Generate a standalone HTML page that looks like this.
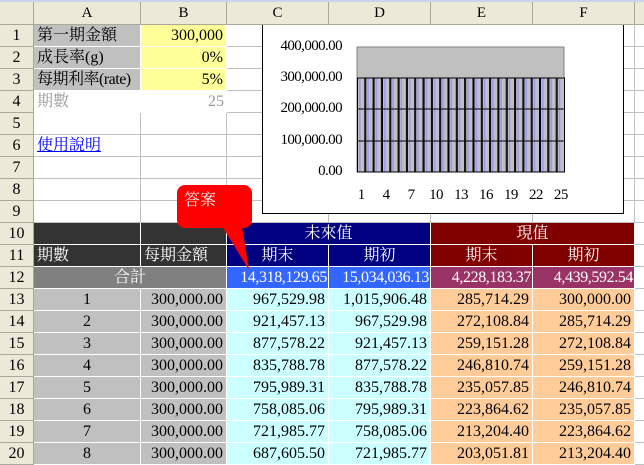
<!DOCTYPE html>
<html><head><meta charset="utf-8"><style>
body{margin:0;width:644px;height:458px;overflow:hidden;background:#fff;font-family:"Liberation Serif","Noto Serif CJK TC",serif;font-size:16px;}
.c{position:absolute;box-sizing:border-box;line-height:21px;white-space:nowrap;overflow:hidden}
.h{background:#ece9d8;color:#000;text-align:center;border-right:1px solid #aca899;border-bottom:1px solid #aca899;font-size:15px}
</style></head><body>
<div id="g"></div>
<svg style="position:absolute;left:0;top:0" width="644" height="458"></svg>
<script>
var X=[0,34,141,227,329,431,533,635,700];
var out='';
function cell(x,y,w,h,bg,txt,al,col,extra){out+='<div class="c" style="left:'+x+'px;top:'+y+'px;width:'+w+'px;height:'+h+'px;background:'+bg+';text-align:'+(al||'left')+';color:'+(col||'#000')+';padding:0 3px;'+(extra||'')+'">'+(txt||'')+'</div>';}
for(var r=1;r<=20;r++){var y=25+(r-1)*22;for(var c=1;c<8;c++){cell(X[c],y,X[c+1]-X[c],22,'#fff','','left','#000','border-right:1px solid #c0c0c0;border-bottom:1px solid #c0c0c0');}}
out+='<div class="c" style="left:0;top:0;width:644px;height:2px;background:#c8d4ee"></div>';
var L=['','A','B','C','D','E','F',''];
out+='<div class="c h" style="left:0;top:2px;width:34px;height:23px"></div>';
for(var c=1;c<8;c++)out+='<div class="c h" style="left:'+X[c]+'px;top:2px;width:'+(X[c+1]-X[c])+'px;height:23px;line-height:22px">'+L[c]+'</div>';
for(var r=1;r<=20;r++)out+='<div class="c h" style="left:0;top:'+(25+(r-1)*22)+'px;width:34px;height:22px;font-size:16px">'+r+'</div>';
var wb='border-right:1px solid #fff;border-bottom:1px solid #fff;';
function R(r){return 25+(r-1)*22;}
cell(34,R(1),107,22,'#c0c0c0','第一期金額','left','#000',wb);cell(141,R(1),86,22,'#ffff99','300,000','right','#000',wb);
cell(34,R(2),107,22,'#c0c0c0','成長率(g)','left','#000',wb);cell(141,R(2),86,22,'#ffff99','0%','right','#000',wb);
cell(34,R(3),107,22,'#c0c0c0','每期利率(rate)','left','#000',wb+'letter-spacing:-0.5px');cell(141,R(3),86,22,'#ffff99','5%','right','#000',wb);
cell(34,R(4),107,22,'#fff','期數','left','#999','');cell(141,R(4),86,22,'#fff','25','right','#999','');
cell(34,R(6),107,21,'transparent','<u>使用說明</u>','left','#00f','');
cell(34,R(10),107,22,'#333','', 'left','#fff',wb);cell(141,R(10),86,22,'#333','','left','#fff',wb);
cell(227,R(10),204,22,'#000080','未來值','center','#fff',wb);cell(431,R(10),204,22,'#800000','現值','center','#fff',wb);
cell(34,R(11),107,22,'#333','期數','left','#fff',wb);cell(141,R(11),86,22,'#333','每期金額','left','#fff',wb);
cell(227,R(11),102,22,'#000080','期末','center','#fff',wb);cell(329,R(11),102,22,'#000080','期初','center','#fff',wb);
cell(431,R(11),102,22,'#800000','期末','center','#fff',wb);cell(533,R(11),102,22,'#800000','期初','center','#fff',wb);
cell(34,R(12),193,22,'#808080','合計','center','#fff',wb);
var p='padding:0 1px;letter-spacing:-0.4px;';
cell(227,R(12),102,22,'#3366ff','14,318,129.65','right','#fff',wb+p);cell(329,R(12),102,22,'#3366ff','15,034,036.13','right','#fff',wb+p);
cell(431,R(12),102,22,'#993366','4,228,183.37','right','#fff',wb+p);cell(533,R(12),102,22,'#993366','4,439,592.54','right','#fff',wb+p);
var D=[['967,529.98','1,015,906.48','285,714.29','300,000.00'],['921,457.13','967,529.98','272,108.84','285,714.29'],['877,578.22','921,457.13','259,151.28','272,108.84'],['835,788.78','877,578.22','246,810.74','259,151.28'],['795,989.31','835,788.78','235,057.85','246,810.74'],['758,085.06','795,989.31','223,864.62','235,057.85'],['721,985.77','758,085.06','213,204.40','223,864.62'],['687,605.50','721,985.77','203,051.81','213,204.40']];
for(var i=0;i<8;i++){var y=R(13+i);cell(34,y,107,22,'#c0c0c0',''+(i+1),'center','#000',wb);cell(141,y,86,22,'#c0c0c0','300,000.00','right','#000',wb);
cell(227,y,102,22,'#ccffff',D[i][0],'right','#000',wb);cell(329,y,102,22,'#ccffff',D[i][1],'right','#000',wb);
cell(431,y,102,22,'#ffcc99',D[i][2],'right','#000',wb);cell(533,y,102,22,'#ffcc99',D[i][3],'right','#000',wb);}
out+='<div class="c" style="left:262px;top:25px;width:362px;height:189px;background:#fff;border:1px solid #000;border-top:none"></div>';
var yl=['400,000.00','300,000.00','200,000.00','100,000.00','0.00'],yy=[47,78,109,141,172];
for(var i=0;i<5;i++)out+='<div class="c" style="left:266px;top:'+(yy[i]-11)+'px;width:76px;text-align:right;font-size:15px;letter-spacing:-0.6px">'+yl[i]+'</div>';
var xl=['1','4','7','10','13','16','19','22','25'];
for(var i=0;i<9;i++){var cx=357+(i*3+0.5)*208/25;out+='<div class="c" style="left:'+(cx-12)+'px;top:185px;width:24px;text-align:center;font-size:15px;letter-spacing:-0.6px">'+xl[i]+'</div>';}
out+='<div class="c" style="left:184px;top:190px;color:#fff;font-size:16px;z-index:3">答案</div>';
document.getElementById('g').innerHTML=out;
var s='<rect x="357" y="47" width="207" height="125" fill="#c0c0c0" stroke="#808080"/>';
for(var i=0;i<25;i++){var x=357+i*208/25;s+='<rect x="'+(x+0.5).toFixed(1)+'" y="78" width="7.3" height="94" fill="#c0c0c0" stroke="#000" stroke-width="1"/><rect x="'+(x+2).toFixed(1)+'" y="78.5" width="1.6" height="93" fill="#9999ff"/>';}
s+='<line x1="357" y1="109" x2="564" y2="109" stroke="#000"/><line x1="357" y1="141" x2="564" y2="141" stroke="#000"/><line x1="357" y1="78" x2="564" y2="78" stroke="#000"/><line x1="357" y1="172" x2="564" y2="172" stroke="#000"/>';
s+='<rect x="177" y="185" width="75" height="43" rx="8" fill="#f00"/><polygon points="222,226 242,226 249,270" fill="#f00"/>';
var sv=document.querySelector('svg');sv.innerHTML=s;sv.style.zIndex=2;
</script>
</body></html>
